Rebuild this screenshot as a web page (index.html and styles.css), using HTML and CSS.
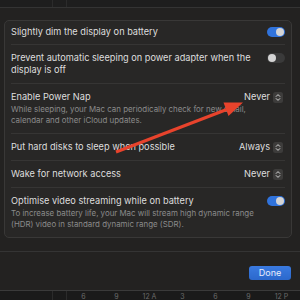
FILE: index.html
```html
<!DOCTYPE html>
<html lang="en">
<head>
    <meta charset="UTF-8">
    <title>Battery Options</title>
    <link rel="stylesheet" href="styles.css">
</head>
<body>

<div class="top-strip">
    <div class="strip-cell first"></div>
    <div class="strip-cell second"></div>
</div>

<div class="sheet">
    <div class="card">
        <div class="row first-row">
            <div class="row-text">
                <div class="title">Slightly dim the display on battery</div>
            </div>
            <span class="toggle on"><span class="knob"></span></span>
        </div>

        <div class="row">
            <div class="row-text">
                <div class="title">Prevent automatic sleeping on power adapter when the<br>display is off</div>
            </div>
            <span class="toggle"><span class="knob"></span></span>
        </div>

        <div class="row">
            <div class="row-text">
                <div class="title">Enable Power Nap</div>
                <div class="subtitle">While sleeping, your Mac can periodically check for new email,<br>calendar and other iCloud updates.</div>
            </div>
            <div class="popup">
                <span>Never</span>
                <svg class="stepper" width="10" height="11" viewBox="0 0 10 11">
                    <rect width="10" height="11" rx="2.5" fill="#3d3c3b"/>
                    <path d="M3.2 4.4 L5 2.6 L6.8 4.4 M3.2 6.6 L5 8.4 L6.8 6.6" fill="none" stroke="#d6d6d6" stroke-width="1" stroke-linecap="round" stroke-linejoin="round"/>
                </svg>
            </div>
        </div>

        <div class="row">
            <div class="row-text">
                <div class="title">Put hard disks to sleep when possible</div>
            </div>
            <div class="popup">
                <span>Always</span>
                <svg class="stepper" width="10" height="11" viewBox="0 0 10 11">
                    <rect width="10" height="11" rx="2.5" fill="#3d3c3b"/>
                    <path d="M3.2 4.4 L5 2.6 L6.8 4.4 M3.2 6.6 L5 8.4 L6.8 6.6" fill="none" stroke="#d6d6d6" stroke-width="1" stroke-linecap="round" stroke-linejoin="round"/>
                </svg>
            </div>
        </div>

        <div class="row">
            <div class="row-text">
                <div class="title">Wake for network access</div>
            </div>
            <div class="popup">
                <span>Never</span>
                <svg class="stepper" width="10" height="11" viewBox="0 0 10 11">
                    <rect width="10" height="11" rx="2.5" fill="#3d3c3b"/>
                    <path d="M3.2 4.4 L5 2.6 L6.8 4.4 M3.2 6.6 L5 8.4 L6.8 6.6" fill="none" stroke="#d6d6d6" stroke-width="1" stroke-linecap="round" stroke-linejoin="round"/>
                </svg>
            </div>
        </div>

        <div class="row">
            <div class="row-text">
                <div class="title">Optimise video streaming while on battery</div>
                <div class="subtitle">To increase battery life, your Mac will stream high dynamic range<br>(HDR) video in standard dynamic range (SDR).</div>
            </div>
            <span class="toggle on"><span class="knob"></span></span>
        </div>
    </div>

    <div class="footer">
        <button class="done-btn">Done</button>
    </div>
</div>

<div class="bottom-strip">
    <div class="strip-cell first"></div>
    <div class="strip-cell second"></div>
    <div class="axis">
        <span>6</span><span>9</span><span>12 A</span><span>3</span><span>6</span><span>9</span><span>12 P</span>
    </div>
</div>

<!-- annotation arrow drawn over the sheet -->
<svg class="arrow" width="300" height="300" viewBox="0 0 300 300">
    <line x1="116" y1="152" x2="228" y2="109" stroke="#e8432c" stroke-width="3"/>
    <polygon points="243,102.5 223.5,102.5 228.5,116" fill="#e8432c"/>
</svg>

</body>
</html>
```

FILE: styles.css
```css
body {
    margin: 0;
    width: 300px;
    height: 300px;
    overflow: hidden;
    display: flex;
    flex-direction: column;
    background-color: #1c1c1c;
    font-family: Inter, "Noto Sans", sans-serif;
    color: #dcdcdc;
}

/* strips of the window behind the sheet */
.top-strip {
    height: 7px;
    flex-shrink: 0;
    display: flex;
    background-color: #1e1e1e;
}

.strip-cell.first {
    width: 52px;
    border-right: 1px solid #2b2b2b;
}

.strip-cell.second {
    width: 13px;
    border-right: 1px solid #2b2b2b;
}

.bottom-strip {
    height: 9px;
    flex-shrink: 0;
    display: flex;
    background-color: #1a1a1a;
    border-top: 1px solid #3a3a3a;
    overflow: hidden;
}

.axis {
    display: flex;
    padding-top: 2px;
    font-size: 7px;
    line-height: 7px;
    color: #6a6a6a;
}

.axis span {
    width: 33px;
    text-align: center;
}

/* sheet */
.sheet {
    flex: 1;
    display: flex;
    flex-direction: column;
    border-top: 1px solid #343434;
    background-color: #232221;
    padding: 12px 8px 0 4px;
}

.card {
    border: 1px solid #393837;
    border-radius: 5px;
    background-color: #282726;
}

.row {
    display: flex;
    align-items: flex-start;
    justify-content: space-between;
    margin: 0 6px;
    padding: 7px 0;
    border-top: 1px solid #363534;
}

.row.first-row {
    border-top: none;
    padding-top: 5px;
    padding-bottom: 6px;
}

.row-text {
    flex: 1;
    min-width: 0;
    white-space: nowrap;
}

.title {
    font-size: 9.2px;
    line-height: 12px;
    color: #dedede;
}

.subtitle {
    margin-top: 1px;
    font-size: 7.9px;
    line-height: 11px;
    color: #8b8b8b;
}

.toggle {
    position: relative;
    flex-shrink: 0;
    width: 18px;
    height: 10px;
    margin-top: 1px;
    border-radius: 5px;
    background-color: #3a3a3a;
}

.toggle.on {
    background-color: #3073dc;
}

.knob {
    position: absolute;
    top: 1px;
    left: 1px;
    width: 8px;
    height: 8px;
    border-radius: 50%;
    background-color: #d4d4d4;
}

.toggle.on .knob {
    left: 9px;
}

.popup {
    display: flex;
    flex-shrink: 0;
    align-items: center;
    gap: 3px;
    margin-right: 2px;
    font-size: 9.2px;
    line-height: 12px;
    color: #dedede;
}

.stepper {
    display: block;
}

.footer {
    flex: 1;
    display: flex;
    justify-content: flex-end;
    align-items: flex-start;
    margin: 13px -8px 0 -4px;
    padding: 14px 9px 0 0;
    border-top: 1px solid #343434;
}

.done-btn {
    width: 42px;
    height: 14px;
    padding: 0;
    border: none;
    border-radius: 3px;
    background-color: #2f6fd6;
    background-image: linear-gradient(#3a7ae0, #2b68cc);
    color: #e8eefc;
    font-family: Inter, "Noto Sans", sans-serif;
    font-size: 9px;
    line-height: 14px;
}

.arrow {
    position: absolute;
    top: 0;
    left: 0;
    pointer-events: none;
}
```
